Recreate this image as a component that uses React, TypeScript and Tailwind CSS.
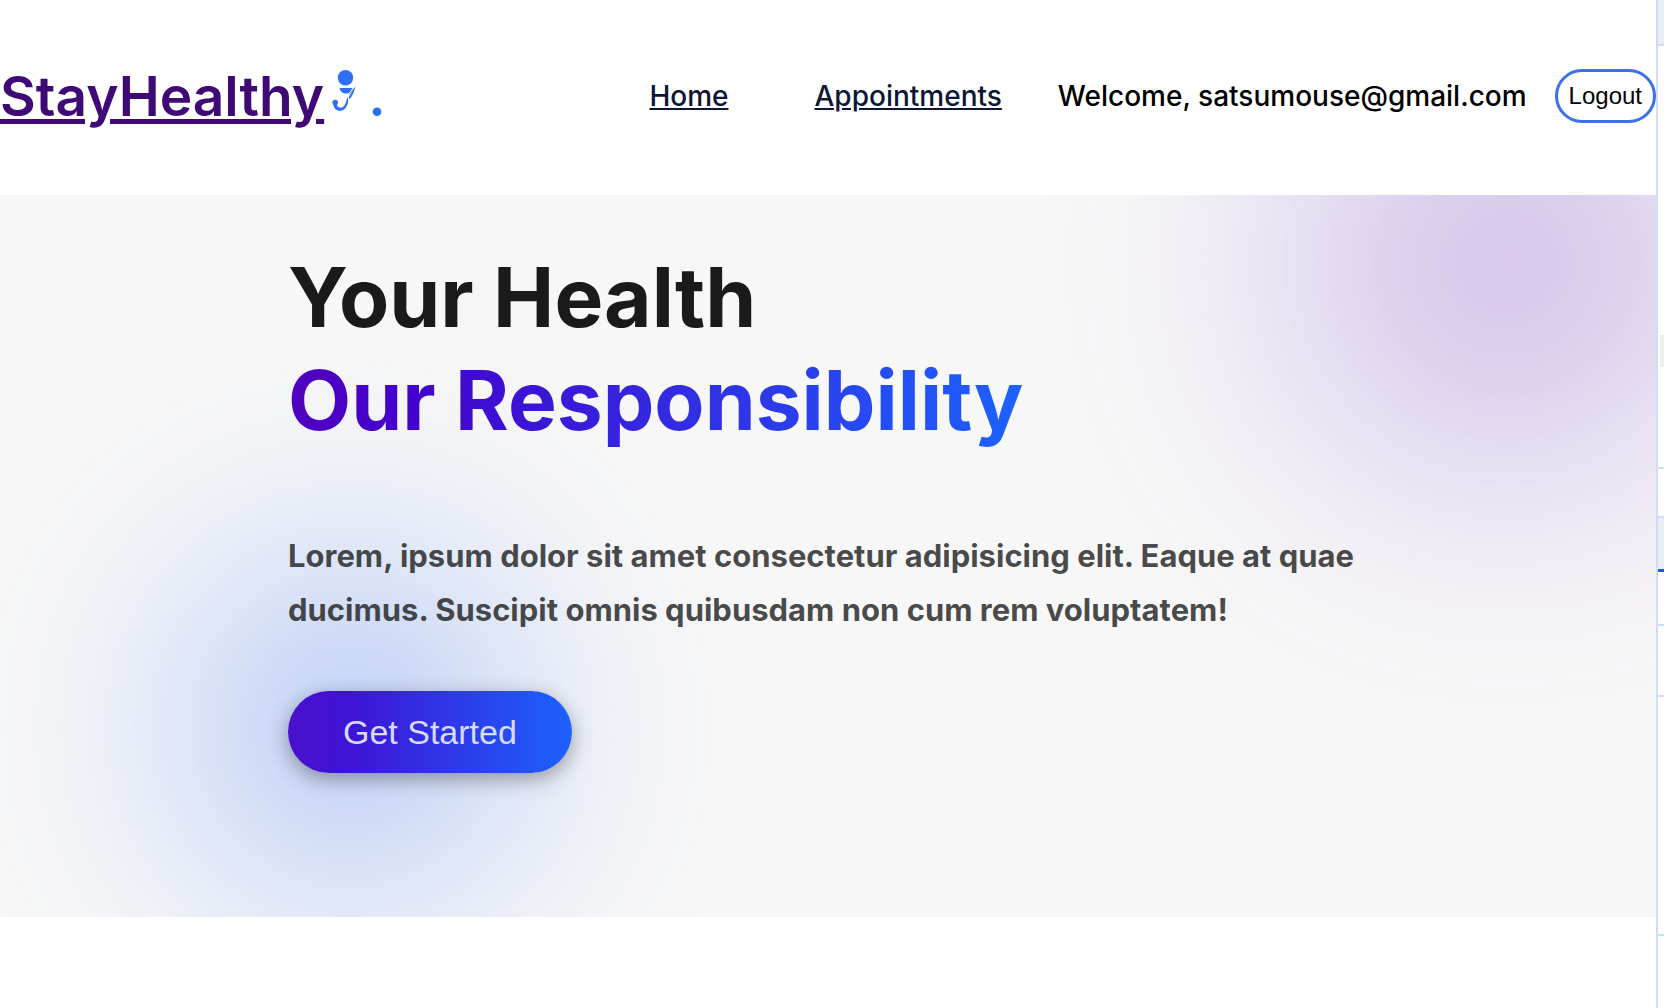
const rail = [
  'h-[46px] border-b-2 border-[#cddcf7] bg-[#e9eef9]',
  'h-[423px] border-b-2 border-[#cddcf7] pt-[289px]',
  'h-[49px] border-b-2 border-[#cddcf7]',
  'h-[54px] border-b-3 border-[#2457d6] bg-[#e9eef9]',
  'h-[54px] border-b-2 border-[#cddcf7]',
  'h-[71px] border-b-2 border-[#cddcf7]',
  'h-[239px] border-b-2 border-[#cddcf7]',
];

function LogoMark() {
  return (
    <svg viewBox="0 0 24 44" className="mt-2 h-11 w-6 self-start" fill="#2d6ff7" aria-hidden="true">
      <circle cx="13.500" cy="7.800" r="7.700" />
      <path d="M7.500 18H20.500L18 22Q16 23.700 13.500 23.500Q8.500 23 7.500 18Z" />
      <path d="M23 17L16.500 27.500L17.500 29Q22 24.500 23 17Z" />
      <path d="M23 17.500L17 24.500" stroke="#2d6ff7" strokeWidth="0.800" />
      <path d="M15.500 27Q17.500 31 14.500 36.500Q11.500 41.500 7 40.800Q2 40 1.200 34L4.500 33Q5 37.500 8.500 37.700Q12.500 37.500 14 32Z" />
      <circle cx="3.200" cy="32.500" r="2.800" />
    </svg>
  );
}

function Header() {
  return (
    <header className="flex h-[195px] items-center justify-between pb-1">
      <div className="flex items-center text-[55px] leading-[68px] font-semibold">
        <a href="#" className="text-[#3f0a75] underline">StayHealthy</a>
        <span className="ml-2 flex items-center gap-3 text-[#2d6ff7]">
          <LogoMark />
          <span>.</span>
        </span>
      </div>
      <nav className="flex items-center text-[28px] leading-9 font-medium">
        <a href="#home" className="text-[#0c1736] underline">Home</a>
        <a href="#appointments" className="ml-[86px] text-[#0c1736] underline">Appointments</a>
        <span className="ml-14 text-black">Welcome, satsumouse@gmail.com</span>
        <button
          type="button"
          className="ml-7 h-[54px] rounded-full border-3 border-[#3a70e8] bg-white px-[11px] font-['Liberation_Sans',sans-serif] text-2xl font-normal text-black"
        >
          Logout
        </button>
      </nav>
    </header>
  );
}

function Hero() {
  return (
    <section className="relative h-[722px] overflow-hidden bg-[#f7f7f7] px-72">
      <div className="absolute top-[355px] left-[174px] size-[352px] rounded-full bg-[#3b73f7] opacity-33 blur-[110px]" />
      <div className="absolute -top-[143px] -right-[61px] size-[420px] rounded-full bg-[#7c42cd] opacity-34 blur-[136px]" />
      <div className="relative pt-[51px]">
        <h1 className="text-[82px] leading-[103px] font-bold text-[#1a1a1a]">
          Your Health
          <br />
          <span className="bg-linear-to-r/srgb from-[#5000c0] via-[#4400cc] via-15% to-[#1c62ff] bg-clip-text text-transparent">
            Our Responsibility
          </span>
        </h1>
        <p className="mt-[77px] text-[31px] leading-[54px] font-bold text-[#1a1a1a]/80">
          Lorem, ipsum dolor sit amet consectetur adipisicing elit. Eaque at quae ducimus. Suscipit
          omnis quibusdam non cum rem voluptatem!
        </p>
        <button
          type="button"
          className="mt-[54px] h-[82px] rounded-full bg-linear-to-r/srgb from-[#4a10cc] via-[#3f12d4] via-20% to-[#1c62ff] px-[55px] font-['Liberation_Sans',sans-serif] text-[34px] text-[#d5dcff] shadow-[0_6px_20px_rgba(0,0,0,0.35)]"
        >
          Get Started
        </button>
      </div>
    </section>
  );
}

export default function App() {
  return (
    <div className="flex min-h-screen bg-white font-['Inter',sans-serif]">
      <main className="min-w-0 flex-1">
        <Header />
        <Hero />
      </main>
      <aside className="flex w-2 flex-col border-l-2 border-[#cddcf7]">
        {rail.map((row, i) => (
          <div key={i} className={row}>
            {i === 1 && <div className="ml-0.5 h-8 bg-[#eeeeee]" />}
          </div>
        ))}
      </aside>
    </div>
  );
}
